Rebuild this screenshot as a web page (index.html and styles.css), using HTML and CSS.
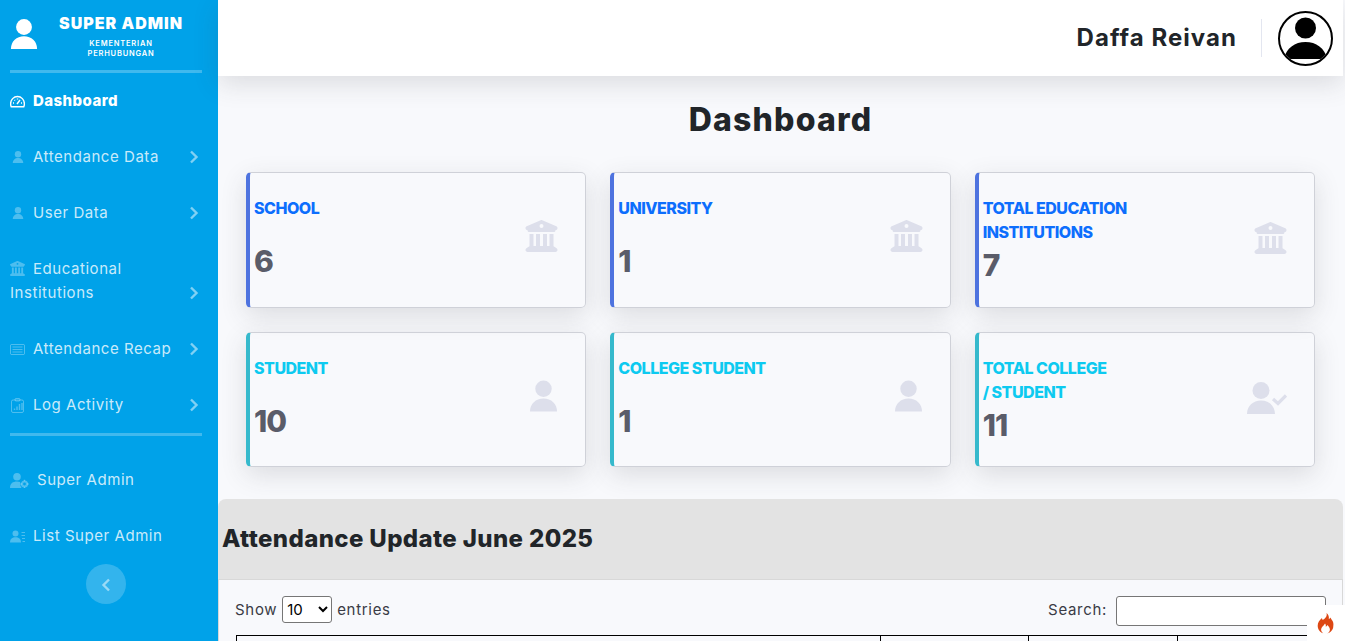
FILE: index.html
```html
<!DOCTYPE html>
<html lang="en">
<head>
  <meta charset="UTF-8">
  <title>Dashboard</title>
  <link rel="stylesheet" href="styles.css">
</head>
<body>

  <svg class="defs" width="0" height="0">
    <symbol id="person" viewBox="0 0 30 32">
      <circle cx="15" cy="8.5" r="8.5"/>
      <path d="M1 32c0-8 6-13.500 14-13.500S29 24 29 32z"/>
    </symbol>
    <symbol id="columns" viewBox="0 0 512 512">
      <path d="M243.400 2.600l-224 96c-14 6-21.800 21-18.700 35.800S16.800 160 32 160v8c0 13.300 10.700 24 24 24H456c13.300 0 24-10.700 24-24v-8c15.200 0 28.300-10.700 31.300-25.600s-4.800-29.900-18.700-35.800l-224-96c-8-3.400-17.200-3.400-25.200 0zM128 224H64V420.300c-.6 .3-1.200 .7-1.800 1.100l-48 32c-11.700 7.800-17 22.400-12.900 35.900S17.900 512 32 512H480c14.100 0 26.500-9.200 30.600-22.700s-1.100-28.100-12.900-35.900l-48-32c-.6-.4-1.200-.7-1.800-1.100V224H384V416H344V224H280V416H232V224H168V416H128V224zM256 64a32 32 0 1 1 0 64 32 32 0 1 1 0-64z"/>
    </symbol>
    <symbol id="chevron" viewBox="0 0 10 14">
      <path d="M2 1.500L7.500 7 2 12.500" fill="none" stroke="currentColor" stroke-width="2.400"/>
    </symbol>
  </svg>

  <aside class="sidebar">
    <div class="brand">
      <svg class="brand-icon"><use href="#person"/></svg>
      <div class="brand-text">
        <div class="brand-name">SUPER ADMIN</div>
        <div class="brand-sub">KEMENTERIAN<br>PERHUBUNGAN</div>
      </div>
    </div>
    <hr class="side-line">

    <a class="nav-item active">
      <svg class="nav-icon line" viewBox="0 0 15 12" stroke-width="1.400">
        <path d="M1.200 11.200C.8 10.200.6 9.300.6 8.300.6 4.200 3.700 1 7.500 1s6.900 3.200 6.900 7.300c0 1-.2 1.900-.6 2.900z"/>
        <path d="M7 8.500l3-4M3 7.500h1M11 7.500h1M4.500 4.500l.6.6M7.500 3v1"/>
      </svg>
      <span>Dashboard</span>
    </a>
    <a class="nav-item">
      <svg class="nav-icon dim small"><use href="#person"/></svg>
      <span>Attendance Data</span>
      <svg class="chev"><use href="#chevron"/></svg>
    </a>
    <a class="nav-item">
      <svg class="nav-icon dim small"><use href="#person"/></svg>
      <span>User Data</span>
      <svg class="chev"><use href="#chevron"/></svg>
    </a>
    <a class="nav-item wrap">
      <span><svg class="nav-icon dim inline"><use href="#columns"/></svg>Educational<br>Institutions</span>
      <svg class="chev low"><use href="#chevron"/></svg>
    </a>
    <a class="nav-item">
      <svg class="nav-icon dim line" viewBox="0 0 15 11">
        <rect x=".5" y=".5" width="14" height="10" rx="1"/>
        <path d="M2.500 3h10M2.500 5.500h10M2.500 8h10"/>
      </svg>
      <span>Attendance Recap</span>
      <svg class="chev"><use href="#chevron"/></svg>
    </a>
    <a class="nav-item">
      <svg class="nav-icon dim line" viewBox="0 0 15 15">
        <rect x="1.500" y="2" width="12" height="12.500" rx="1.500"/>
        <rect x="5" y=".5" width="5" height="2.500" rx="1"/>
        <path d="M4.500 12v-1.500M7 12V8.500M9.500 12V6M12 12V5" stroke-width="1.400"/>
      </svg>
      <span>Log Activity</span>
      <svg class="chev"><use href="#chevron"/></svg>
    </a>
    <hr class="side-line second">

    <a class="nav-item">
      <svg class="nav-icon dim wide" viewBox="0 0 19 15">
        <circle cx="7" cy="3.800" r="3.800"/>
        <path d="M0 15c0-4.500 2.800-6.500 7-6.500 1.300 0 2.300.2 3.200.6-.4 1.800.2 4 1.300 5.900z"/>
        <circle class="ring" cx="14.500" cy="11" r="2.500" stroke-width="2.200"/>
        <path d="M14.500 6.800v1.400M14.500 13.800v1.400M10.300 11h1.400M17.300 11h1.400" stroke="currentColor" stroke-width="1.400"/>
      </svg>
      <span>Super Admin</span>
    </a>
    <a class="nav-item">
      <svg class="nav-icon dim" viewBox="0 0 15 12">
        <circle cx="5.500" cy="3" r="3"/>
        <path d="M0 12c0-3.700 2.300-5.200 5.500-5.200S11 8.300 11 12z"/>
        <path d="M11.500 2h3.500M11.500 5h3.500M12 8h3M12.500 11h2.500" stroke="currentColor" stroke-width="1.200"/>
      </svg>
      <span>List Super Admin</span>
    </a>

    <button class="collapse-btn" type="button">
      <svg class="collapse-chev"><use href="#chevron"/></svg>
    </button>
  </aside>

  <div class="main">
    <header class="topbar">
      <span class="topbar-name">Daffa Reivan</span>
      <span class="topbar-sep"></span>
      <span class="avatar">
        <svg class="avatar-img" viewBox="0 0 51 51">
          <circle cx="25.500" cy="15" r="10.500"/>
          <path d="M4 46c2-11 11-17 21.500-17S45 35 47 46z"/>
        </svg>
      </span>
    </header>

    <h1 class="page-title">Dashboard</h1>

    <div class="stats">
      <div class="stat blue">
        <div class="stat-row">
          <div class="stat-text">
            <div class="stat-title">SCHOOL</div>
            <div class="stat-value">6</div>
          </div>
          <svg class="stat-icon"><use href="#columns"/></svg>
        </div>
      </div>
      <div class="stat blue">
        <div class="stat-row">
          <div class="stat-text">
            <div class="stat-title">UNIVERSITY</div>
            <div class="stat-value">1</div>
          </div>
          <svg class="stat-icon"><use href="#columns"/></svg>
        </div>
      </div>
      <div class="stat blue">
        <div class="stat-row">
          <div class="stat-text">
            <div class="stat-title">TOTAL EDUCATION<br>INSTITUTIONS</div>
            <div class="stat-value">7</div>
          </div>
          <svg class="stat-icon"><use href="#columns"/></svg>
        </div>
      </div>
      <div class="stat cyan">
        <div class="stat-row">
          <div class="stat-text">
            <div class="stat-title">STUDENT</div>
            <div class="stat-value">10</div>
          </div>
          <svg class="stat-icon"><use href="#person"/></svg>
        </div>
      </div>
      <div class="stat cyan">
        <div class="stat-row">
          <div class="stat-text">
            <div class="stat-title">COLLEGE STUDENT</div>
            <div class="stat-value">1</div>
          </div>
          <svg class="stat-icon"><use href="#person"/></svg>
        </div>
      </div>
      <div class="stat cyan">
        <div class="stat-row">
          <div class="stat-text">
            <div class="stat-title">TOTAL COLLEGE<br>/ STUDENT</div>
            <div class="stat-value">11</div>
          </div>
          <svg class="stat-icon wide" viewBox="0 0 40 32">
            <circle cx="14" cy="8.500" r="8.500"/>
            <path d="M0 32c0-8 6-13.500 14-13.500S28 24 28 32z"/>
            <path d="M26 17l5 4.500 8-8" fill="none" stroke="currentColor" stroke-width="3.200"/>
          </svg>
        </div>
      </div>
    </div>

    <section class="panel">
      <div class="panel-head">
        <h2>Attendance Update June 2025</h2>
      </div>
      <div class="panel-body">
        <div class="table-tools">
          <label>Show
            <select>
              <option>10</option>
              <option>25</option>
              <option>50</option>
            </select>
            entries</label>
          <label class="search">Search: <input type="search"></label>
        </div>
        <table class="data-table">
          <tr><th></th><th></th><th></th><th></th></tr>
        </table>
      </div>
    </section>
  </div>

  <div class="debug-badge">
    <svg viewBox="0 0 18 21" width="18" height="21">
      <path fill="#dd4814" d="M9.500 0c.8 2.500-.3 4-2 5.700C5.600 7.600 5.200 6.800 5 5 2.300 7 .7 9.700.7 12.800c0 3.800 2.700 6.900 6 7.700-1.600-.9-2.600-2.300-2.600-3.900 0-2.300 2.500-3.700 3.900-6.100.9 1.200 1 2.200.7 3.300.9-.3 1.500-1 1.800-1.800.9 1.200 2.400 2.500 2.400 4.600 0 1.600-1 3-2.600 3.900 3.300-.8 6-3.700 6-7.500C17.300 8.500 14 6.500 13.500 4.500c-.5.800-1 1.300-1.700 1.600C12.200 3.700 11.500 1.500 9.500 0z"/>
    </svg>
  </div>

</body>
</html>
```

FILE: styles.css
```css
* {
  box-sizing: border-box;
}

html, body {
  height: 100%;
  overflow: hidden;
}

body {
  margin: 0;
  display: flex;
  font-family: Inter, "Liberation Sans", sans-serif;
  background: #f8f9fc;
  color: #212529;
}

.defs {
  position: absolute;
}

/* sidebar */
.sidebar {
  flex: 0 0 218px;
  padding: 0 16px 0 10px;
  background: #00a2e9;
  color: #fff;
}

.brand {
  display: flex;
  height: 70px;
  padding-top: 18px;
}

.brand-icon {
  width: 28px;
  height: 32px;
  fill: #fff;
}

.brand-text {
  flex: 1;
  margin-left: 2px;
  text-align: center;
}

.brand-name {
  margin-top: -4px;
  font-size: 16px;
  font-weight: 900;
  line-height: 18px;
  letter-spacing: 1px;
}

.brand-sub {
  margin-top: 7px;
  font-size: 7.500px;
  font-weight: 600;
  line-height: 10px;
  letter-spacing: .8px;
}

.side-line {
  height: 3px;
  margin: 0;
  border: 0;
  background: rgba(255, 255, 255, .25);
}

.side-line.second {
  margin-bottom: 16px;
}

.nav-item {
  display: flex;
  align-items: center;
  padding: 16px 0;
  font-size: 15px;
  line-height: 24px;
  letter-spacing: .55px;
  color: rgba(255, 255, 255, .8);
}

.nav-item.active {
  color: #fff;
  font-weight: 800;
  letter-spacing: .45px;
}

.nav-item.wrap {
  align-items: flex-end;
}

.nav-item span {
  margin-left: 8px;
}

.nav-item.wrap span {
  flex: 1;
  margin-left: 0;
}

.nav-icon {
  flex: none;
  width: 15px;
  height: 15px;
  fill: currentColor;
}

.nav-icon.line {
  fill: none;
  stroke: currentColor;
}

.nav-icon .ring {
  fill: none;
  stroke: currentColor;
}

.nav-icon.dim {
  color: rgba(255, 255, 255, .3);
}

.nav-icon.small {
  width: 12px;
  height: 12px;
  margin: 0 1px 0 2px;
}

.nav-icon.wide {
  width: 19px;
}

.nav-icon.inline {
  margin-right: 8px;
  vertical-align: -2px;
}

.chev {
  flex: none;
  width: 10px;
  height: 14px;
  margin: 0 3px 0 auto;
  color: rgba(255, 255, 255, .5);
}

.chev.low {
  margin-bottom: 5px;
}

.collapse-btn {
  display: block;
  width: 40px;
  height: 40px;
  margin: 0 auto;
  padding: 0;
  border: 0;
  border-radius: 50%;
  background: rgba(255, 255, 255, .2);
  color: rgba(255, 255, 255, .5);
}

.collapse-chev {
  width: 10px;
  height: 14px;
  transform: rotate(180deg);
  vertical-align: middle;
}

/* main column */
.main {
  flex: 1;
  min-width: 0;
  margin-right: 2px;
}

.topbar {
  display: flex;
  align-items: center;
  justify-content: flex-end;
  height: 76px;
  padding-right: 10px;
  background: #fff;
  box-shadow: 0 8px 26px rgba(58, 59, 69, .15);
}

.topbar-name {
  margin-top: -2px;
  font-size: 24px;
  font-weight: 700;
  letter-spacing: 1.050px;
}

.topbar-sep {
  width: 1px;
  height: 38px;
  margin: 0 16px 0 24px;
  background: #e3e6f0;
}

.avatar {
  display: flex;
  width: 55px;
  height: 55px;
  border: 2px solid #000;
  border-radius: 50%;
  overflow: hidden;
}

.avatar-img {
  width: 51px;
  height: 51px;
}

.page-title {
  margin: 24px 0 32px;
  font-size: 32px;
  font-weight: 800;
  line-height: 40px;
  letter-spacing: 1.200px;
  text-align: center;
}

.stats {
  display: grid;
  grid-template-columns: repeat(3, 1fr);
  grid-auto-rows: 135.500px;
  gap: 24px;
  margin: 0 28px;
}

.stat {
  padding: 23px 27px 0 4px;
  border: 1px solid #cfd1d8;
  border-left-width: 4px;
  border-radius: 5px;
  box-shadow: 0 8px 26px rgba(58, 59, 69, .15);
}

.stat.blue {
  border-left-color: #4e73df;
}

.stat.cyan {
  border-left-color: #36b9cc;
}

.stat-row {
  display: flex;
  align-items: center;
}

.stat-text {
  flex: 1;
}

.stat-title {
  min-height: 44px;
  font-size: 16px;
  font-weight: 800;
  line-height: 24px;
  letter-spacing: -.5px;
}

.blue .stat-title {
  color: #0d6efd;
}

.cyan .stat-title {
  color: #0dcaf0;
}

.stat-value {
  font-size: 30px;
  font-weight: 800;
  line-height: 42px;
  letter-spacing: -1px;
  color: #5a5c69;
}

.stat-icon {
  flex: none;
  width: 33px;
  height: 32px;
  margin-bottom: 6px;
  fill: #dddfeb;
  color: #dddfeb;
}

.cyan .stat-icon {
  width: 29px;
}

.cyan .stat-icon.wide {
  width: 40px;
}

/* attendance table */
.panel {
  margin-top: 32px;
}

.panel-head {
  display: flex;
  align-items: center;
  height: 80px;
  padding: 0 0 2px 4px;
  border-radius: 8px 8px 0 0;
  background: #e3e3e3;
}

.panel-head h2 {
  margin: 0;
  font-size: 24px;
  font-weight: 800;
  letter-spacing: .38px;
}

.panel-body {
  padding: 16px 16px 16px 17px;
  border: 1px solid #d8d8d8;
}

.table-tools {
  display: flex;
  align-items: flex-start;
  justify-content: space-between;
  height: 39px;
  margin-left: -1px;
  font-size: 15px;
  line-height: 27px;
  letter-spacing: .7px;
  color: #3a3b45;
}

.table-tools select {
  width: 50px;
  height: 27px;
  font: inherit;
  letter-spacing: normal;
  background: #fff;
  border: 1px solid #767676;
  border-radius: 3px;
}

.table-tools input {
  width: 210px;
  height: 30px;
  margin-left: 4px;
  border: 1px solid #767676;
  border-radius: 3px;
  background: #fff;
  vertical-align: top;
}

.data-table {
  width: 100%;
  border-collapse: collapse;
  table-layout: fixed;
}

.data-table th {
  width: 148.500px;
  height: 40px;
  border: 1px solid #000;
}

.data-table th:first-child {
  width: auto;
}

.debug-badge {
  position: fixed;
  right: 0;
  bottom: 0;
  display: flex;
  align-items: center;
  justify-content: center;
  width: 38px;
  height: 36px;
  background: #fff;
}
```
